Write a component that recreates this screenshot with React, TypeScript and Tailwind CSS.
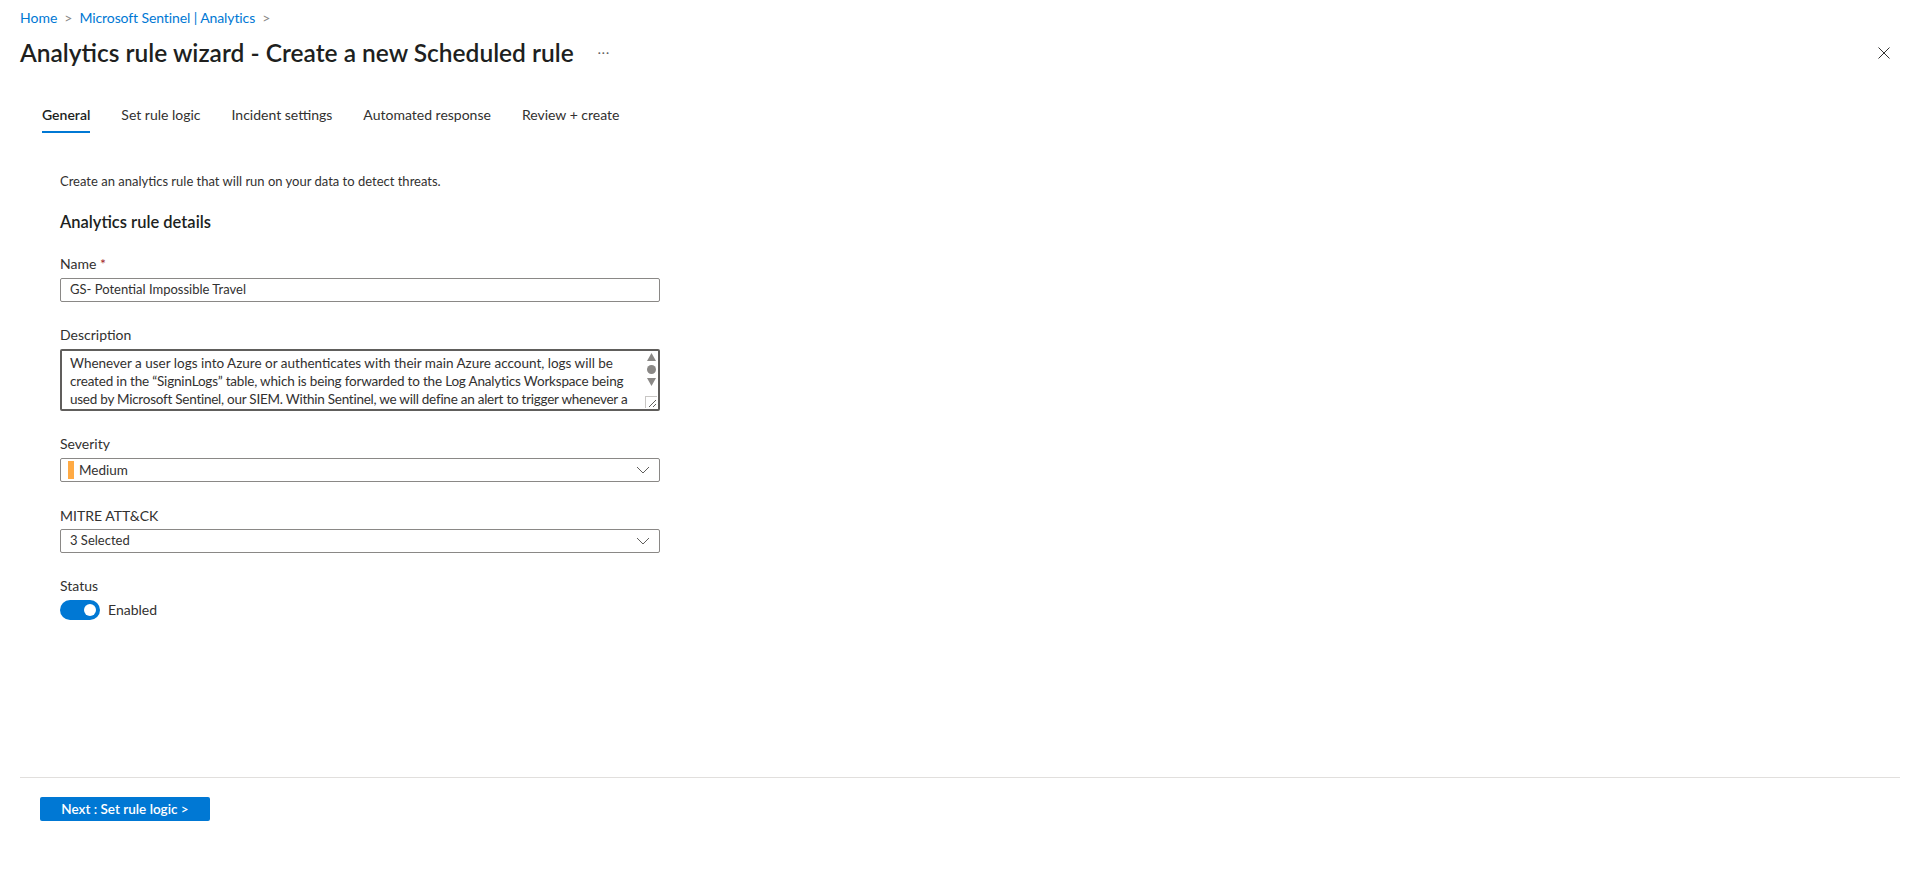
import React from "react";

const tabs = ["General", "Set rule logic", "Incident settings", "Automated response", "Review + create"];

const descLines = [
  { text: "Whenever a user logs into Azure or authenticates with their main Azure account, logs will be", cls: "" },
  {
    text: "created in the \u201CSigninLogs\u201D table, which is being forwarded to the Log Analytics Workspace being",
    cls: "tracking-[-0.18px]",
  },
  {
    text: "used by Microsoft Sentinel, our SIEM. Within Sentinel, we will define an alert to trigger whenever a",
    cls: "tracking-[-0.25px]",
  },
];

function Chevron({ className = "" }: { className?: string }) {
  return (
    <svg width="14" height="8" viewBox="0 0 14 8" className={className}>
      <polyline points="1,1 7,7 13,1" fill="none" stroke="#605e5c" strokeWidth="1" />
    </svg>
  );
}

function Label({ children, className = "" }: { children: React.ReactNode; className?: string }) {
  return <div className={`text-[14px] leading-[20px] text-[#323130] ${className}`}>{children}</div>;
}

export default function App() {
  return (
    <div className="h-screen flex flex-col bg-white text-[#323130] font-['Segoe_UI','Lato',sans-serif]">
      <div className="flex-1 px-5">
        {/* breadcrumb */}
        <div className="pt-[8px] flex items-center gap-[7px] text-[14px] leading-[20px] text-[#0078d4]">
          <span>Home</span>
          <span className="text-[#8a8886]">&gt;</span>
          <span className="tracking-[-0.1px]">Microsoft Sentinel | Analytics</span>
          <span className="text-[#8a8886]">&gt;</span>
        </div>

        {/* header */}
        <div className="mt-[9px] flex items-center justify-between">
          <div className="flex items-center">
            <h1 className="text-[24.5px] leading-[32px] font-semibold text-[#201f1e]">
              Analytics rule wizard - Create a new Scheduled rule
            </h1>
            <span className="ml-[24px] text-[12px] text-[#605e5c] tracking-[1px]">···</span>
          </div>
          <svg width="12" height="12" viewBox="0 0 12 12" className="mr-[9px]">
            <path d="M0.5 0.5 L11.5 11.5 M11.5 0.5 L0.5 11.5" stroke="#323130" strokeWidth="1" />
          </svg>
        </div>

        {/* tabs */}
        <div className="mt-[36px] ml-[22px] flex gap-[31px]">
          {tabs.map((t, i) => (
            <div
              key={t}
              className={`text-[14px] leading-[20px] pb-[6px] border-b-2 ${
                i === 0 ? "border-[#0078d4] font-semibold text-[#201f1e]" : "border-transparent text-[#323130]"
              }`}
            >
              {t}
            </div>
          ))}
        </div>

        {/* form */}
        <div className="ml-[40px] w-[600px]">
          <p className="mt-[38px] text-[13px] leading-[20px]">
            Create an analytics rule that will run on your data to detect threats.
          </p>
          <h2 className="mt-[19px] text-[16.5px] leading-[24px] font-semibold text-[#201f1e]">
            Analytics rule details
          </h2>

          <Label className="mt-[20px]">
            Name <span className="text-[#a4262c]">*</span>
          </Label>
          <div className="mt-[4px] h-[24px] border border-[#8a8886] rounded-[2px] px-[9px] flex items-center text-[13px]">
            GS- Potential Impossible Travel
          </div>

          <Label className="mt-[23px]">Description</Label>
          <div className="mt-[4px] h-[62px] border-2 border-[#605e5c] rounded-[2px] flex overflow-hidden">
            <div className="flex-1 min-w-0 overflow-hidden pl-[8px] pt-[3px] text-[13.5px] leading-[18px]">
              {descLines.map((l) => (
                <div key={l.text} className={`whitespace-nowrap ${l.cls}`}>
                  {l.text}
                </div>
              ))}
            </div>
            <div className="w-[14px] shrink-0 flex flex-col items-center pt-[1px]">
              <svg width="9" height="8" viewBox="0 0 9 8" className="mt-[1px]">
                <polygon points="4.5,0 9,8 0,8" fill="#8a8886" />
              </svg>
              <div className="mt-[4px] w-[9px] h-[9px] rounded-full bg-[#8a8886]" />
              <svg width="9" height="8" viewBox="0 0 9 8" className="mt-[4px]">
                <polygon points="0,0 9,0 4.5,8" fill="#8a8886" />
              </svg>
              <div className="mt-auto mb-[1px] w-[12px] h-[12px] border-l border-t border-[#c8c6c4] relative">
                <svg width="11" height="11" viewBox="0 0 11 11" className="absolute right-0 bottom-0">
                  <path d="M10 3 L3 10 M10 7 L7 10" stroke="#605e5c" strokeWidth="1" />
                </svg>
              </div>
            </div>
          </div>

          <Label className="mt-[23px]">Severity</Label>
          <div className="mt-[4px] h-[24px] border border-[#8a8886] rounded-[2px] pl-[7px] pr-[9px] flex items-center text-[13.5px]">
            <span className="w-[6px] h-[18px] bg-[#ffaa44] mr-[5px]" />
            <span className="flex-1">Medium</span>
            <Chevron />
          </div>

          <Label className="mt-[24px]">MITRE ATT&amp;CK</Label>
          <div className="mt-[3px] h-[24px] border border-[#8a8886] rounded-[2px] pl-[9px] pr-[9px] flex items-center text-[13px]">
            <span className="flex-1">3 Selected</span>
            <Chevron />
          </div>

          <Label className="mt-[23px]">Status</Label>
          <div className="mt-[4px] flex items-center">
            <div className="w-[40px] h-[20px] rounded-full bg-[#0078d4] flex items-center justify-end pr-[4px]">
              <div className="w-[12px] h-[12px] rounded-full bg-white" />
            </div>
            <span className="ml-[8px] text-[14px] leading-[20px]">Enabled</span>
          </div>
        </div>
      </div>

      {/* footer */}
      <div className="ml-[20px] mr-[19px] border-t border-[#e1dfdd] pt-[18px] pb-[48px] pl-[20px]">
        <button className="w-[170px] h-[24px] rounded-[2px] bg-[#0078d4] text-white text-[13.5px] font-semibold leading-[24px]">
          Next : Set rule logic &gt;
        </button>
      </div>
    </div>
  );
}
